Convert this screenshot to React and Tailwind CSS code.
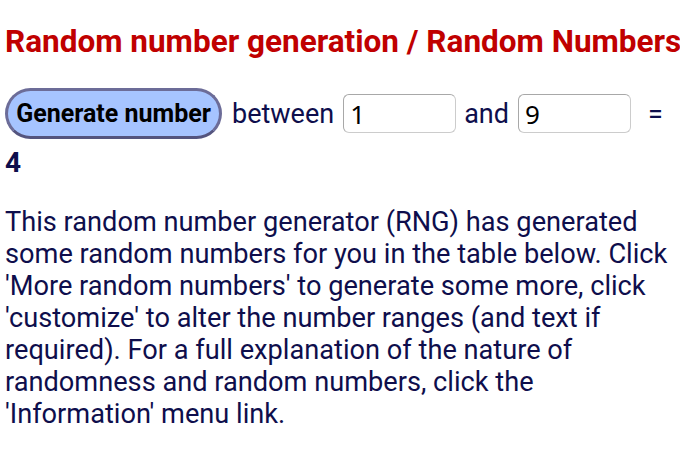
export default function App() {
  return (
    <div className="min-h-screen bg-white px-[5px] text-[#0e0e4c]" style={{ fontFamily: 'Roboto, sans-serif' }}>
      <h1 className="pt-[24px] text-[31.5px] font-bold leading-[36px] text-[#c00000] whitespace-nowrap">
        Random number generation / Random Numbers
      </h1>
      <div className="mt-[28px] flex items-center text-[27px] leading-[32px]">
        <button className="h-[51px] w-[217px] rounded-full border-[3px] border-[#6c6c98] border-b-[#54547e] bg-[#a6c4ff] text-[25px] font-bold text-black">
          Generate number
        </button>
        <span className="ml-[10px]">between</span>
        <input
          defaultValue="1"
          className="ml-[9px] h-[39px] w-[113px] rounded-[6px] border border-[#cccccc] border-l-[#a8a8a8] border-t-[#a8a8a8] px-[6px] text-[26px] text-black"
          style={{ fontFamily: '"Noto Sans", sans-serif' }}
        />
        <span className="ml-[8px]">and</span>
        <input
          defaultValue="9"
          className="ml-[9px] h-[39px] w-[113px] rounded-[6px] border border-[#cccccc] border-l-[#a8a8a8] border-t-[#a8a8a8] px-[6px] text-[26px] text-black"
          style={{ fontFamily: '"Noto Sans", sans-serif' }}
        />
        <span className="ml-[17px]">=</span>
      </div>
      <div className="mt-[8px] text-[28px] font-bold leading-[32px]">4</div>
      <p className="mt-[27px] text-[27.2px] leading-[32px]">
        This random number generator (RNG) has generated some random numbers for you in the table below. Click 'More random numbers' to generate some more, click 'customize' to alter the number ranges (and text if required). For a full explanation of the nature of randomness and random numbers, click the 'Information' menu link.
      </p>
    </div>
  )
}
